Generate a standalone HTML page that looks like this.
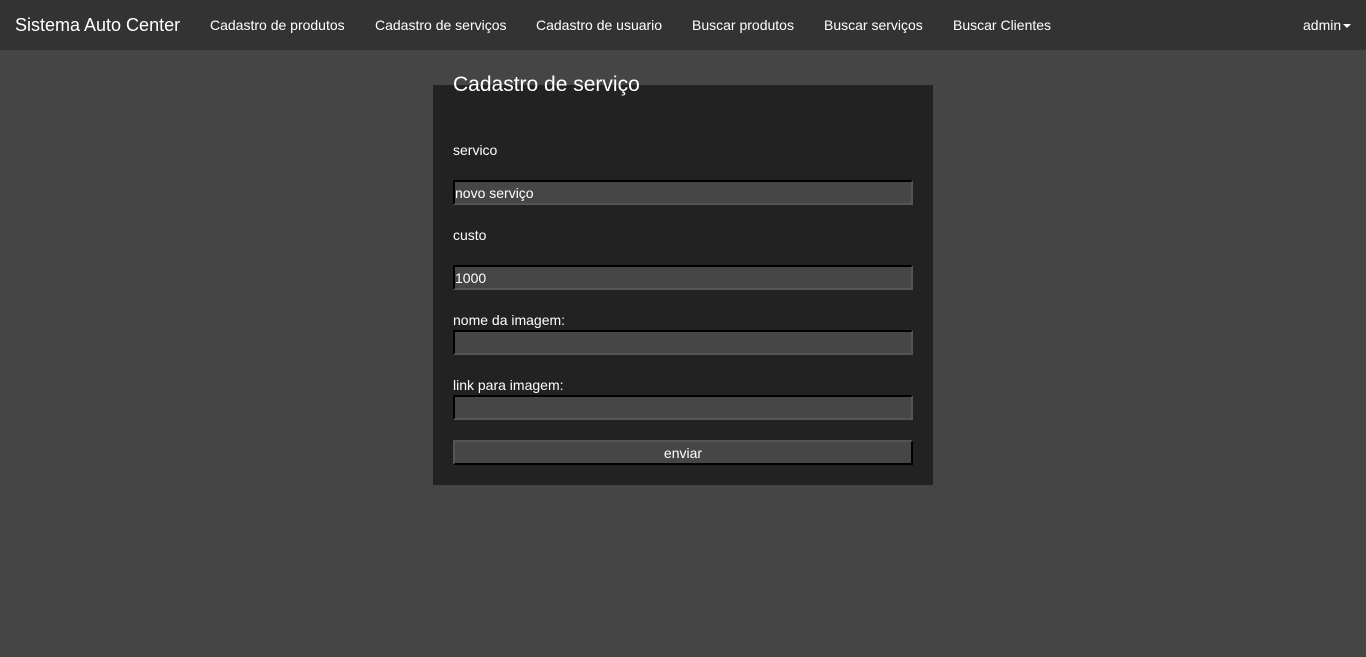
<!DOCTYPE html>
<html><head><meta charset="utf-8"><style>
body{margin:0;background:#454545;font-family:"Liberation Sans",Arial,sans-serif;color:#fff;width:1366px;height:657px;overflow:hidden;position:relative}
.nav{position:absolute;left:0;top:0;width:1366px;height:50px;background:#333}
.nav span{position:absolute;top:17px;font-size:14px;color:#fff;white-space:nowrap}
.brand{font-size:18px!important;top:15px!important}
.box{position:absolute;left:433px;top:85px;width:500px;height:400px;background:#222}
.t{position:absolute;font-size:14px;white-space:nowrap}
.in{position:absolute;left:453px;width:456px;height:21px;background:#464646;border:2px solid;border-color:#000 #555 #555 #000;font-size:14px;line-height:23px;padding-left:0}
.btn{position:absolute;left:453px;top:440px;width:456px;height:21px;background:#464646;border:2px solid;border-color:#555 #000 #000 #555;font-size:14px;line-height:23px;text-align:center}
.caret{display:inline-block;width:0;height:0;border-left:4px solid transparent;border-right:4px solid transparent;border-top:4px solid #fff;vertical-align:middle;margin-left:2px}
</style></head><body>
<div class="nav">
<span class="brand" style="left:15px">Sistema Auto Center</span>
<span style="left:210px">Cadastro de produtos</span>
<span style="left:375px">Cadastro de serviços</span>
<span style="left:536px">Cadastro de usuario</span>
<span style="left:692px">Buscar produtos</span>
<span style="left:824px">Buscar serviços</span>
<span style="left:953px">Buscar Clientes</span>
<span style="left:1303px">admin<i class="caret"></i></span>
</div>
<div class="box"></div>
<div class="t" style="left:453px;top:73px;font-size:21px">Cadastro de serviço</div>
<div class="t" style="left:453px;top:142px">servico</div>
<div class="in" style="top:180px">novo serviço</div>
<div class="t" style="left:453px;top:227px">custo</div>
<div class="in" style="top:265px">1000</div>
<div class="t" style="left:453px;top:312px">nome da imagem:</div>
<div class="in" style="top:330px"></div>
<div class="t" style="left:453px;top:377px">link para imagem:</div>
<div class="in" style="top:395px"></div>
<div class="btn">enviar</div>
</body></html>
